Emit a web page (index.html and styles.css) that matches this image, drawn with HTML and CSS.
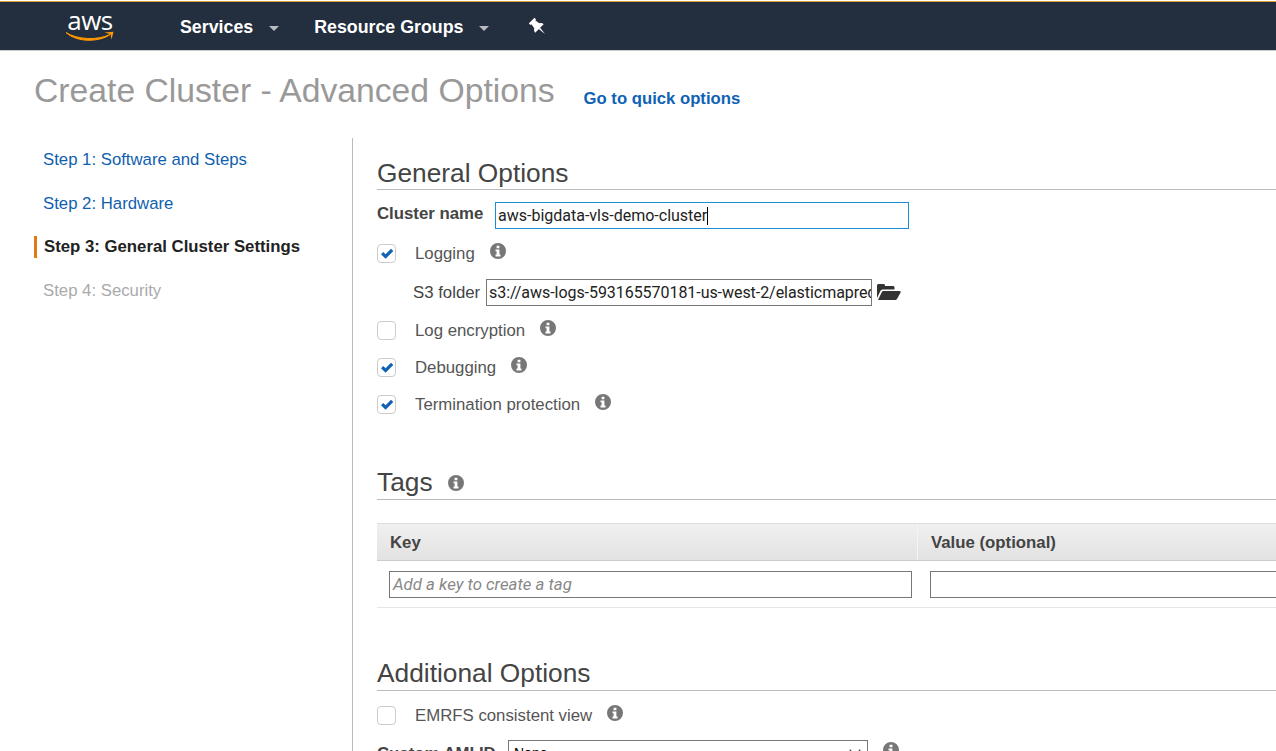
FILE: index.html
```html
<!DOCTYPE html>
<html lang="en">
<head>
    <meta charset="UTF-8">
    <title>Create Cluster - Advanced Options</title>
    <link rel="stylesheet" href="styles.css">
</head>
<body>
    <svg class="defs" width="0" height="0">
        <symbol id="info" viewBox="0 0 16 16">
            <path fill-rule="evenodd" d="M8 0a8 8 0 1 0 0 16A8 8 0 0 0 8 0zM6.600 2.700h2.800v2.500H6.600zM5.500 6.400h3.900v5.100h1.100v1.900h-5v-1.900h1.100V8.300H5.500z"/>
        </symbol>
        <symbol id="check" viewBox="0 0 18 18">
            <path d="M3 9.200L5.300 6.900L7.600 9.200L13 3.800L15.300 6.100L7.600 13.800z"/>
        </symbol>
    </svg>

    <header class="topbar">
        <div class="logo">
            <span class="logo-text">aws</span>
            <svg class="smile" width="50" height="11" viewBox="0 0 50 11">
                <path d="M1 1.500C12 8.500 32 9.800 45 3.500C36 10.500 13 12.500 1 1.500z" fill="#f90" stroke="#f90" stroke-width="1"/>
                <path d="M39.500 1.500L48.500 0.800L46.500 8.500L45.500 3.300z" fill="#f90"/>
            </svg>
        </div>
        <a class="nav-item services">Services<span class="caret"></span></a>
        <a class="nav-item groups">Resource Groups<span class="caret"></span></a>
        <svg class="pin" width="18" height="20" viewBox="-1 -1 18 20">
            <g transform="rotate(-45 8 9)" fill="#fff">
                <path d="M4 0h8v2.300h-1.200l.7 5c1.700.9 2.500 2.200 2.500 3.700H2c0-1.500.8-2.800 2.500-3.700l.7-5H4z"/>
                <path d="M7 11h2L8 19z"/>
            </g>
        </svg>
    </header>

    <div class="title-row">
        <h1>Create Cluster - Advanced Options</h1>
        <a class="quick-link">Go to quick options</a>
    </div>

    <div class="layout">
        <nav class="steps">
            <a class="step">Step 1: Software and Steps</a>
            <a class="step">Step 2: Hardware</a>
            <a class="step current">Step 3: General Cluster Settings</a>
            <a class="step disabled">Step 4: Security</a>
        </nav>

        <main class="content">
            <section class="general">
                <h2>General Options</h2>
                <div class="name-row">
                    <label class="strong">Cluster name</label>
                    <div class="text-box focused">aws-bigdata-vls-demo-cluster<span class="cursor"></span></div>
                </div>
                <div class="check-row first">
                    <span class="checkbox"><svg width="18" height="18"><use href="#check"/></svg></span>
                    <span class="check-label">Logging</span>
                    <svg class="info"><use href="#info"/></svg>
                </div>
                <div class="s3-row">
                    <label>S3 folder</label>
                    <div class="text-box s3">s3://aws-logs-593165570181-us-west-2/elasticmapreduce/</div>
                    <svg class="folder" width="24" height="18" viewBox="0 0 24 18">
                        <path d="M0 15V2.500C0 1.700 .7 1 1.500 1H6.500C7.300 1 8 1.700 8 2.500V3H16C16.800 3 17.500 3.700 17.500 4.500V6.500H6C4.800 6.500 4 7 3.400 8z" fill="#333"/>
                        <path d="M1 17L5 8.800C5.300 8.200 5.800 8 6.500 8H22.500C23.600 8 24 8.800 23.600 9.500L20 16C19.600 16.700 19 17 18.200 17z" fill="#333"/>
                    </svg>
                </div>
                <div class="check-row">
                    <span class="checkbox"></span>
                    <span class="check-label">Log encryption</span>
                    <svg class="info"><use href="#info"/></svg>
                </div>
                <div class="check-row">
                    <span class="checkbox"><svg width="18" height="18"><use href="#check"/></svg></span>
                    <span class="check-label">Debugging</span>
                    <svg class="info"><use href="#info"/></svg>
                </div>
                <div class="check-row">
                    <span class="checkbox"><svg width="18" height="18"><use href="#check"/></svg></span>
                    <span class="check-label">Termination protection</span>
                    <svg class="info"><use href="#info"/></svg>
                </div>
            </section>

            <section class="tags">
                <h2>Tags <svg class="info"><use href="#info"/></svg></h2>
                <div class="tag-head">
                    <div class="tag-key">Key</div>
                    <div class="tag-value">Value (optional)</div>
                </div>
                <div class="tag-row">
                    <div class="text-box key-input">Add a key to create a tag</div>
                    <div class="text-box value-input"></div>
                </div>
            </section>

            <section class="additional">
                <h2>Additional Options</h2>
                <div class="check-row first">
                    <span class="checkbox"></span>
                    <span class="check-label">EMRFS consistent view</span>
                    <svg class="info"><use href="#info"/></svg>
                </div>
                <div class="ami-row">
                    <label class="strong">Custom AMI ID</label>
                    <div class="select-box">None<span class="chevron"></span></div>
                    <svg class="info"><use href="#info"/></svg>
                </div>
            </section>
        </main>
    </div>
</body>
</html>
```

FILE: styles.css
```css
html, body {
    height: 751px;
    overflow: hidden;
}

body {
    margin: 0;
    background-color: #fff;
    font-family: "Liberation Sans", Arial, sans-serif;
    font-size: 16.800px;
    color: #444;
}

.defs {
    display: block;
}

a {
    text-decoration: none;
}

/* top bar */
.topbar {
    display: flex;
    align-items: center;
    box-sizing: border-box;
    height: 50px;
    margin-top: 1px;
    background-color: #232f3e;
    border-top: 1px solid #e0a030;
    border-bottom: 1px solid #ccc;
}

.logo {
    display: flex;
    flex-direction: column;
    align-items: center;
    width: 50px;
    margin-left: 65px;
    margin-top: -2px;
}

.logo-text {
    font-family: "Open Sans", sans-serif;
    font-size: 26px;
    line-height: 22px;
    color: #fff;
    letter-spacing: -0.5px;
}

.smile {
    display: block;
}

.nav-item {
    display: flex;
    align-items: center;
    padding-top: 2px;
    color: #fff;
    font-size: 17.800px;
    font-weight: bold;
}

.services {
    margin-left: 65px;
}

.groups {
    margin-left: 35px;
}

.caret {
    width: 0;
    height: 0;
    margin-left: 16px;
    margin-top: 2px;
    border-left: 5px solid transparent;
    border-right: 5px solid transparent;
    border-top: 5px solid #b8bcc2;
}

.pin {
    margin-left: 40px;
    margin-top: 1px;
}

/* page title */
.title-row {
    display: flex;
    align-items: flex-start;
    height: 87px;
    padding-left: 34px;
}

h1 {
    margin: 19px 0 0;
    font-size: 33.700px;
    font-weight: normal;
    line-height: 40px;
    color: #999;
}

.quick-link {
    margin: 38px 0 0 29px;
    font-size: 16.700px;
    line-height: 20px;
    font-weight: bold;
    color: #0f62b5;
}

/* layout */
.layout {
    display: flex;
    height: 613px;
}

.steps {
    flex: none;
    display: flex;
    flex-direction: column;
    box-sizing: border-box;
    width: 353px;
    padding-top: 11px;
    border-right: 1px solid #bbb;
}

.step {
    padding-left: 43px;
    margin-bottom: 22px;
    font-size: 16.750px;
    line-height: 22px;
    color: #0f5fb0;
}

.step.current {
    margin-top: -1px;
    margin-left: 34px;
    padding-left: 7px;
    border-left: 3px solid #e47911;
    font-weight: bold;
    color: #222;
}

.step.disabled {
    color: #aaa;
}

.content {
    flex: 1;
    min-width: 0;
    padding-left: 24px;
    overflow: hidden;
}

h2 {
    margin: 0;
    padding-bottom: 1px;
    border-bottom: 1px solid #bbb;
    font-size: 26.300px;
    font-weight: normal;
    line-height: 30px;
    color: #444;
}

.tags h2,
.additional h2 {
    padding-bottom: 3px;
    line-height: 28px;
}

.general {
    padding-top: 20px;
}

.tags {
    margin-top: 53px;
}

.additional {
    margin-top: 51px;
}

.strong {
    font-weight: bold;
}

/* form rows */
.name-row {
    display: flex;
    align-items: center;
    margin-top: 12px;
}

.name-row label {
    width: 118px;
    margin-bottom: 4px;
}

.text-box {
    box-sizing: border-box;
    overflow: hidden;
    white-space: nowrap;
    border: 1px solid #777;
    background-color: #fff;
    font-family: Roboto, sans-serif;
    font-size: 16px;
    line-height: 25px;
    color: #222;
    padding-left: 2px;
}

.text-box.focused {
    width: 414px;
    height: 27px;
    border-color: #1a8cd8;
}

.cursor {
    display: inline-block;
    width: 1px;
    height: 18px;
    vertical-align: -4px;
    background-color: #000;
}

.check-row {
    display: flex;
    align-items: center;
    height: 20px;
    margin-top: 17px;
}

.check-row.first {
    margin-top: 15px;
}

.s3-row + .check-row {
    margin-top: 15px;
}

.checkbox {
    flex: none;
    box-sizing: border-box;
    width: 19px;
    height: 19px;
    margin-top: -2px;
    border: 1px solid #ccc;
    border-radius: 4px;
    fill: #0f62b5;
}

.checkbox svg {
    display: block;
}

.check-label {
    margin-left: 19px;
    color: #555;
}

.info {
    width: 16px;
    height: 16px;
    margin-left: 15px;
    margin-top: -7px;
    fill: #777;
}

.s3-row {
    display: flex;
    align-items: center;
    margin: 15px 0 0 36px;
}

.s3-row label {
    width: 73px;
}

.text-box.s3 {
    width: 386px;
    height: 27px;
    letter-spacing: -0.05px;
}

.folder {
    margin-left: 5px;
    margin-top: -2px;
}

h2 .info {
    margin-left: 8px;
    vertical-align: 0;
}

/* tags table */
.tag-head {
    display: flex;
    box-sizing: border-box;
    height: 38px;
    margin-top: 23px;
    border-top: 1px solid #ddd;
    border-bottom: 1px solid #ccc;
    background: linear-gradient(#f0f0f0, #e2e2e2);
    font-weight: bold;
    line-height: 38px;
    color: #444;
}

.tag-key {
    box-sizing: border-box;
    width: 541px;
    padding-left: 13px;
    border-right: 1px solid #f5f5f5;
}

.tag-value {
    padding-left: 13px;
    white-space: nowrap;
}

.tag-row {
    display: flex;
    padding: 10px 0 9px 12px;
    border-bottom: 1px solid #e5e5e5;
}

.key-input {
    flex: none;
    width: 523px;
    height: 27px;
    padding-left: 3px;
    font-size: 16.800px;
    font-style: italic;
    color: #888;
}

.value-input {
    flex: none;
    width: 500px;
    height: 27px;
    margin-left: 18px;
}

/* custom ami */
.ami-row {
    display: flex;
    align-items: center;
    margin-top: 14px;
}

.ami-row label {
    width: 131px;
}

.select-box {
    display: flex;
    justify-content: space-between;
    box-sizing: border-box;
    width: 360px;
    height: 27px;
    padding: 0 8px 0 5px;
    border: 1px solid #777;
    font-size: 14px;
    line-height: 25px;
    color: #000;
}

.chevron {
    width: 7px;
    height: 7px;
    margin-top: 5px;
    border-right: 1px solid #333;
    border-bottom: 1px solid #333;
    transform: rotate(45deg);
}
```
